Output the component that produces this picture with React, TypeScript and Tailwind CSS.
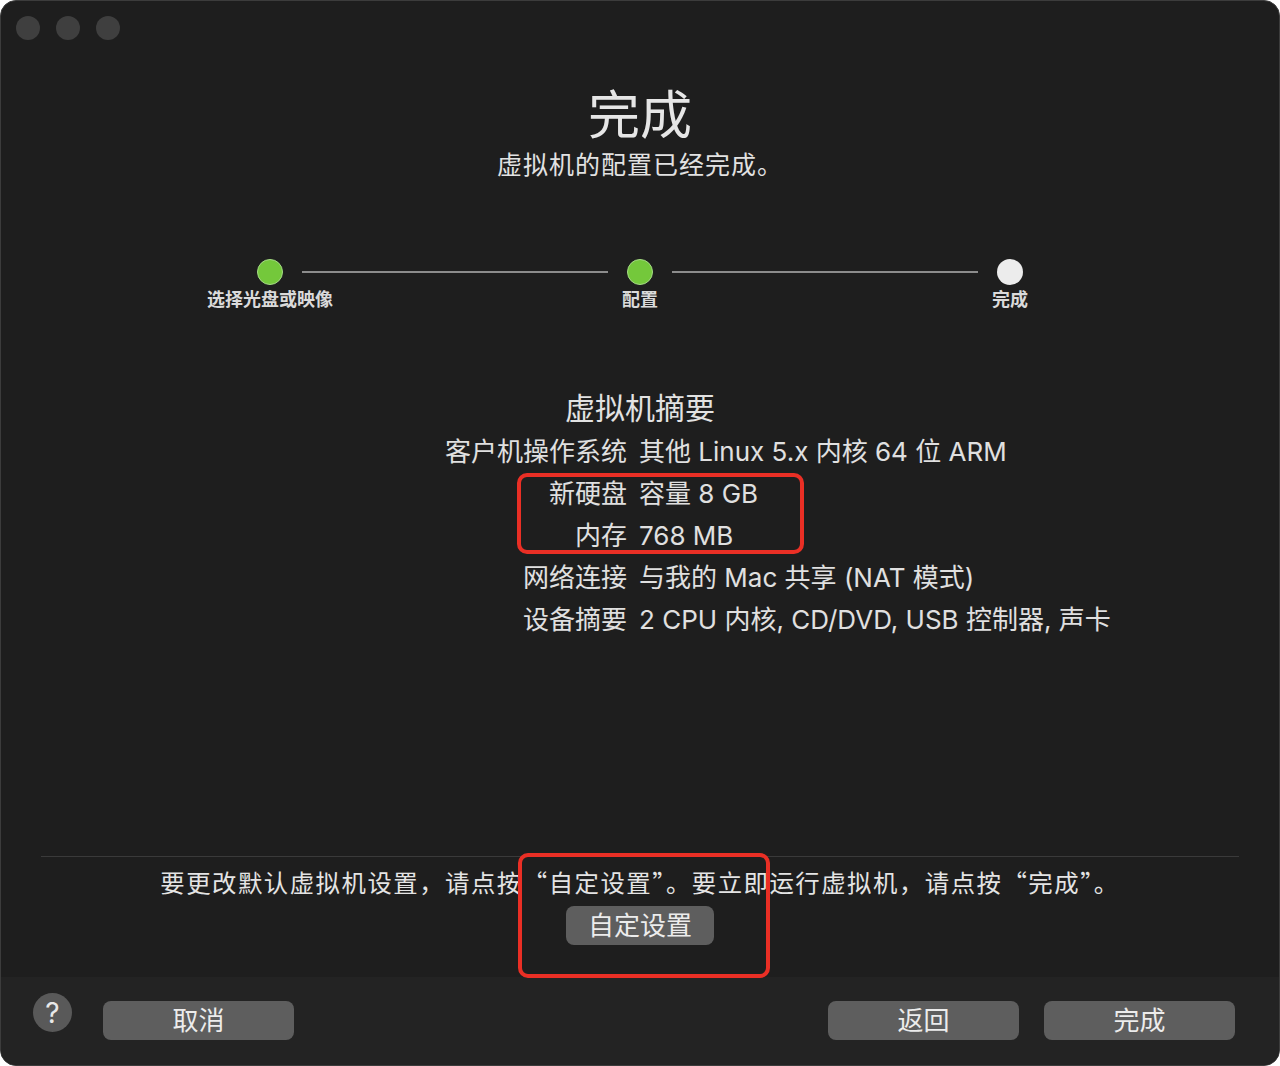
import React from "react";

const rows: [string, string][] = [
  ["客户机操作系统", "其他 Linux 5.x 内核 64 位 ARM"],
  ["新硬盘", "容量 8 GB"],
  ["内存", "768 MB"],
  ["网络连接", "与我的 Mac 共享 (NAT 模式)"],
  ["设备摘要", "2 CPU 内核, CD/DVD, USB 控制器, 声卡"],
];

const steps = [
  { label: "选择光盘或映像", done: true },
  { label: "配置", done: true },
  { label: "完成", done: false },
];

function Step({ label, done }: { label: string; done: boolean }) {
  return (
    <div className="flex w-[26px] flex-col items-center">
      {done ? (
        <div className="h-[26px] w-[26px] rounded-full border border-[#a6dc86] bg-[#74c83b]" />
      ) : (
        <div className="h-[26px] w-[26px] rounded-full bg-[#ececec]" />
      )}
      <div className="mt-[3px] whitespace-nowrap text-[18px] font-semibold leading-[24px] text-[#dadada]">
        {label}
      </div>
    </div>
  );
}

export default function App() {
  return (
    <div className="h-[1066px] w-[1280px] bg-white font-[Inter,'Noto_Sans_CJK_SC',sans-serif]">
      <div className="relative flex h-full w-full flex-col overflow-hidden rounded-[16px] border border-[#3c3c3c] bg-[#1e1e1e] text-[#e2e2e2]">
        {/* title bar */}
        <div className="flex h-[56px] shrink-0 gap-4 pl-[15px] pt-[15px]">
          <div className="h-[24px] w-[24px] rounded-full bg-[#3f3f3f]" />
          <div className="h-[24px] w-[24px] rounded-full bg-[#3f3f3f]" />
          <div className="h-[24px] w-[24px] rounded-full bg-[#3f3f3f]" />
        </div>

        <div className="mt-[28px] text-center text-[52px] leading-[62px] text-[#e6e6e6]">完成</div>
        <div className="text-center font-['Noto_Sans_CJK_SC',sans-serif] text-[25px] leading-[32px] tracking-[1px] text-[#e2e2e2]">
          虚拟机的配置已经完成。
        </div>

        {/* stepper */}
        <div className="mx-auto mt-[80px] flex w-[766px] items-start">
          <Step {...steps[0]} />
          <div className="mx-[19px] mt-[12px] h-[2px] flex-1 bg-[#8c8c8c]" />
          <Step {...steps[1]} />
          <div className="mx-[19px] mt-[12px] h-[2px] flex-1 bg-[#8c8c8c]" />
          <Step {...steps[2]} />
        </div>

        {/* summary */}
        <div className="mt-[76px] text-center text-[30px] leading-[40px] text-[#e2e2e2]">虚拟机摘要</div>
        <div className="mt-[3px] grid grid-cols-[626px_1fr] gap-x-3 text-[26px] leading-[42px] text-[#e0e0e0]">
          {rows.map(([k, v]) => (
            <React.Fragment key={k}>
              <div className="text-right">{k}</div>
              <div className="whitespace-nowrap">{v}</div>
            </React.Fragment>
          ))}
        </div>

        <div className="flex-1" />

        {/* hint */}
        <div className="mx-[40px] h-px bg-[#3a3a3a]" />
        <div className="mt-[9px] text-center font-['Noto_Sans_CJK_SC',sans-serif] text-[24.4px] leading-[32px] tracking-[1.5px] text-[#e4e4e4]">
          要更改默认虚拟机设置，请点按“自定设置”。要立即运行虚拟机，请点按“完成”。
        </div>
        <div className="mt-[8px] flex justify-center pb-[32px]">
          <div className="flex h-[39px] w-[148px] items-center justify-center rounded-[8px] bg-[#5e5e5e] text-[26px] text-[#ececec]">
            自定设置
          </div>
        </div>

        {/* footer */}
        <div className="flex h-[88px] shrink-0 items-start bg-[#232323] pl-[32px] pr-[44px] pt-[24px]">
          <div className="-mt-[8px] flex h-[39px] w-[39px] items-center justify-center rounded-full bg-[#595959] text-[28px] text-[#e8e8e8]">
            ?
          </div>
          <div className="ml-[31px] flex h-[39px] w-[191px] items-center justify-center rounded-[8px] bg-[#5e5e5e] text-[26px] text-[#ececec]">
            取消
          </div>
          <div className="flex-1" />
          <div className="flex h-[39px] w-[191px] items-center justify-center rounded-[8px] bg-[#5e5e5e] text-[26px] text-[#ececec]">
            返回
          </div>
          <div className="ml-[25px] flex h-[39px] w-[191px] items-center justify-center rounded-[8px] bg-[#5e5e5e] text-[26px] text-[#ececec]">
            完成
          </div>
        </div>

        {/* red annotation boxes */}
        <div className="absolute left-[516px] top-[472px] h-[81px] w-[287px] rounded-[10px] border-[4px] border-[#ea2f25]" />
        <div className="absolute left-[517px] top-[852px] h-[125px] w-[252px] rounded-[10px] border-[4px] border-[#ea2f25]" />
      </div>
    </div>
  );
}
